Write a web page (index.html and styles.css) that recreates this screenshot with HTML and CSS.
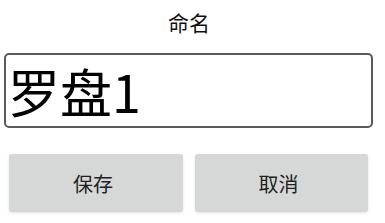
FILE: index.html
```html
<!DOCTYPE html>
<html lang="zh-CN">
<head>
    <meta charset="UTF-8">
    <meta name="viewport" content="width=device-width, initial-scale=1.0">
    <title>命名</title>
    <link rel="stylesheet" href="styles.css">
</head>
<body>
    <div class="dialog">
        <div class="title">命名</div>
        <div class="name-box">
            <input type="text" class="name-input" value="罗盘1">
        </div>
        <div class="actions">
            <button class="button">保存</button>
            <button class="button">取消</button>
        </div>
    </div>
</body>
</html>
```

FILE: styles.css
```css
body {
    margin: 0;
    background: #fff;
    font-family: "Noto Sans CJK SC", "Noto Sans", sans-serif;
    color: #111;
}
.dialog {
    width: 385px;
    height: 223px;
    display: flex;
    flex-direction: column;
}
.title {
    height: 53px;
    padding-top: 7px;
    box-sizing: border-box;
    text-align: center;
    font-size: 21px;
    line-height: 30px;
    padding-right: 7px;
}
.name-box {
    padding-left: 4px;
}
.name-input {
    width: 369px;
    height: 75px;
    box-sizing: border-box;
    border: 2px solid #5a5a5a;
    border-radius: 5px;
    padding: 0 0 0 2px;
    margin: 0;
    font-family: "Noto Sans CJK SC", "Noto Sans", sans-serif;
    font-size: 52px;
    color: #000;
    background: #fff;
    outline: none;
}
.actions {
    display: flex;
    gap: 12px;
    padding: 26px 0 0 9px;
}
.button {
    width: 174px;
    height: 58px;
    border: none;
    border-radius: 3px;
    background: #d6d7d7;
    box-shadow: 0 1px 3px rgba(0, 0, 0, 0.12);
    font-family: "Noto Sans CJK SC", "Noto Sans", sans-serif;
    font-size: 20px;
    color: #222;
    padding: 0 6px 0 0;
    cursor: pointer;
}
.button + .button {
    width: 173px;
}
```
